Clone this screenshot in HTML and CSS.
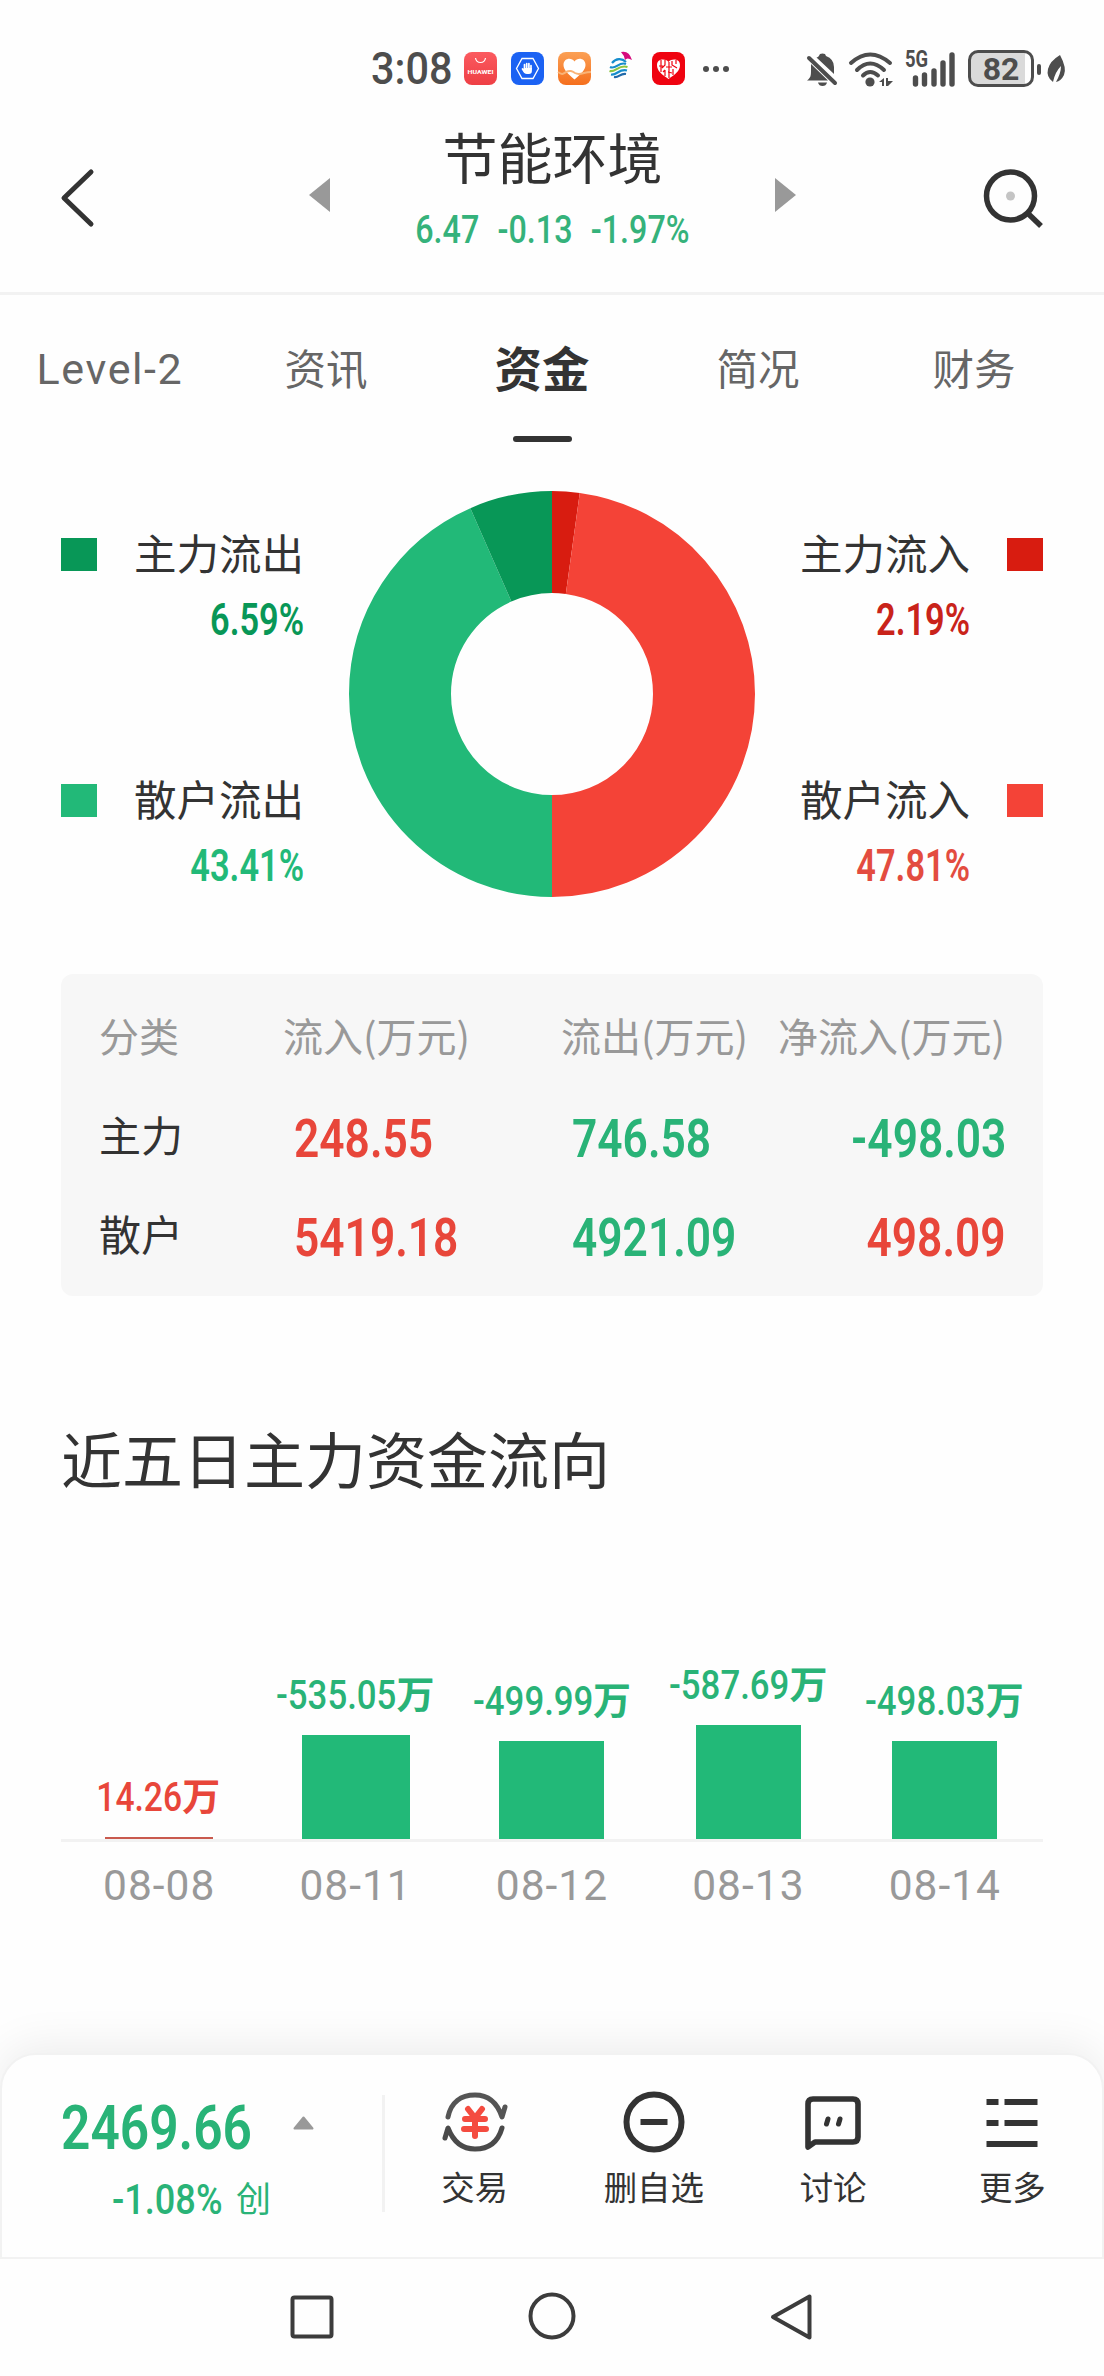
FILE: index.html
```html
<!DOCTYPE html>
<html lang="zh-CN">
<head>
<meta charset="utf-8">
<title>节能环境</title>
<link rel="stylesheet" href="styles.css">
</head>
<body>
<div class="app">
  <div class="status">
    <span class="clock">3:08</span>
    <div class="apps">
      <svg width="33" height="33" viewBox="0 0 33 33"><defs><linearGradient id="hw" x1="0" y1="0" x2="0" y2="1"><stop offset="0" stop-color="#fb5a5f"/><stop offset="1" stop-color="#ee3f45"/></linearGradient></defs><rect width="33" height="33" rx="8" fill="url(#hw)"/><path d="M11.500 6c1 6 9 6 10 0" fill="none" stroke="#fff" stroke-width="1.200"/><text x="16.500" y="21.500" text-anchor="middle" textLength="26" lengthAdjust="spacingAndGlyphs" class="hw-text">HUAWEI</text></svg>
      <svg width="33" height="33" viewBox="0 0 33 33"><rect width="33" height="33" rx="8" fill="#1b62f3"/><path d="M11 6.500h11l5.500 10-5.500 10H11l-5.500-10z" fill="none" stroke="#fff" stroke-width="1.300"/><path d="M13.500 17v-4.500M15.700 16v-4.500M17.900 16v-4.500M20 17v-3.500M11.500 17l2 3" stroke="#fff" stroke-width="1.700" stroke-linecap="round"/><path d="M12.700 16h8.200v3q0 3-3 3h-2q-3 0-3.200-3z" fill="#fff"/></svg>
      <svg width="33" height="33" viewBox="0 0 33 33"><defs><linearGradient id="ht" x1="0" y1="0" x2="0" y2="1"><stop offset="0" stop-color="#fba055"/><stop offset="1" stop-color="#f56f1d"/></linearGradient></defs><rect width="33" height="33" rx="8" fill="url(#ht)"/><path d="M16.500 27.500C10 22 5.500 18 5.500 13c0-7 8-8 11-3.500C19.500 5 27.500 6 27.500 13c0 5-4.500 9-11 14.500z" fill="#fff"/><path d="M0 20c4 3 5 2 8 0 4-2 6-1 9 1 5 3 8-1 16-1" fill="none" stroke="#f9b377" stroke-width="2"/></svg>
      <svg width="33" height="33" viewBox="0 0 33 33"><g fill="none" stroke-width="2.200"><path d="M7 11c4-5 10-5 14-1" stroke="#168dcc"/><path d="M5 15c6 3 9-6 16-3" stroke="#168dcc"/><path d="M4.500 19c6 2 9-7 18-4" stroke="#8cc540"/><path d="M6 22.500c6 1 8-6 16-4" stroke="#168dcc"/><path d="M9 25c5 1 6-4 12-3" stroke="#2069a9"/></g><path d="M16 0q8-2 11 8-5-3-7 0-1-5-4-8z" fill="#d60b7c"/></svg>
      <svg width="33" height="33" viewBox="0 0 33 33"><rect width="33" height="33" rx="8" fill="#ef0310"/><path d="M16.500 27C10 22.500 5 19 5 13c0-6 8-7 11.500-3C20 6 28 7 28 13c0 6-5 9.500-11.500 14z" fill="#fff"/><path d="M9 8v12M13 8v5l-3 3M17 10v16M13 18v6M20 9v4l5 3M21 17v6M24 8v4M7 14h4M14 15h6M16 20l4 1M11 20l2-2" stroke="#ef0310" stroke-width="1.200" fill="none"/></svg>
    </div>
    <svg class="dots" width="28" height="8" viewBox="0 0 28 8" fill="#4d4d4d"><circle cx="4" cy="4" r="3"/><circle cx="14" cy="4" r="3"/><circle cx="24" cy="4" r="3"/></svg>
    <svg class="bell" width="32" height="36" viewBox="0 0 32 36" fill="#4d4d4d"><path d="M1 29.500c4-3 4-5 4-11V13L22 29.500zM12 6q1-1 2-3 2.500-1 5 0L20 5q8 3 8 11v7L10.500 6.500z"/><path d="M3 7l26 25" stroke="#4d4d4d" stroke-width="4" stroke-linecap="round"/><path d="M12 31.500h9q-1 3.500-4.500 3.500T12 31.500z"/></svg>
    <svg class="wifi" width="46" height="36" viewBox="0 0 46 36"><g fill="none" stroke="#4d4d4d" stroke-width="4" stroke-linecap="round"><path d="M3 12Q22-5 42 12"/><path d="M9 19Q22 6 36 19"/><path d="M15 24.500Q22 17.500 30 24.500"/></g><circle cx="22" cy="31" r="4.600" fill="#4d4d4d"/><path d="M36 27v8h-2v-4h-3zM38 35v-8h2v3h5l-5 5z" fill="#4d4d4d"/></svg>
    <div class="signal"><span>5G</span><svg width="52" height="36" viewBox="0 0 52 36"><path d="M10.500 27v6M19.500 24v9M29 20v13M38 12v21M47 4v29" stroke="#4d4d4d" stroke-width="5.400" stroke-linecap="round"/></svg></div>
    <div class="battery">82</div>
    <svg class="leaf" width="29" height="36" viewBox="0 0 29 36"><rect x="1" y="13" width="4" height="11" rx="2" fill="#4d4d4d"/><path d="M24 4q7 13 4 20-3 6-8 7 5-9 5-16-6 6-8 16-7-5-5-13Q14 10 24 4z" fill="#4d4d4d"/></svg>
  </div>

  <header class="header">
    <svg width="36" height="62" viewBox="0 0 36 62"><path d="M32 5L5 31l27 26" fill="none" stroke="#333" stroke-width="5" stroke-linecap="round" stroke-linejoin="round"/></svg>
    <svg class="prev" width="21" height="34" viewBox="0 0 21 34"><path d="M21 0v34L0 17z" fill="#999"/></svg>
    <div class="stock">
      <h1>节能环境</h1>
      <div class="quote"><span class="din">6.47 -0.13 -1.97%</span></div>
    </div>
    <svg class="next" width="21" height="34" viewBox="0 0 21 34"><path d="M0 0v34l21-17z" fill="#999"/></svg>
    <svg width="62" height="62" viewBox="0 0 62 62"><circle cx="26.500" cy="29" r="24" fill="none" stroke="#333" stroke-width="5.500"/><circle cx="26.500" cy="29" r="4.500" fill="#c4c4c4"/><path d="M43.500 46l13.500 13" stroke="#333" stroke-width="5.500"/></svg>
  </header>

  <nav class="tabs">
    <span class="latin">Level-2</span><span>资讯</span><span class="active">资金</span><span>简况</span><span>财务</span>
  </nav>

  <section class="flow">
    <div class="legend left">
      <div class="item deep-green"><i></i><div><b>主力流出</b><span class="din">6.59%</span></div></div>
      <div class="item green"><i></i><div><b>散户流出</b><span class="din">43.41%</span></div></div>
    </div>
    <svg class="donut" width="406" height="406" viewBox="-203 -203 406 406">
      <g fill="none" stroke-width="102" transform="rotate(-90)">
        <circle r="152" pathLength="100" stroke="#d81c10" stroke-dasharray="2.190 97.810"/>
        <circle r="152" pathLength="100" stroke="#f44337" stroke-dasharray="47.810 52.190" stroke-dashoffset="-2.190"/>
        <circle r="152" pathLength="100" stroke="#22b978" stroke-dasharray="43.410 56.590" stroke-dashoffset="-50"/>
        <circle r="152" pathLength="100" stroke="#089757" stroke-dasharray="6.590 93.410" stroke-dashoffset="-93.410"/>
      </g>
    </svg>
    <div class="legend right">
      <div class="item deep-red"><div><b>主力流入</b><span class="din">2.19%</span></div><i></i></div>
      <div class="item red"><div><b>散户流入</b><span class="din">47.81%</span></div><i></i></div>
    </div>
  </section>

  <section class="table">
    <div class="row head"><span>分类</span><span>流入(万元)</span><span>流出(万元)</span><span>净流入(万元)</span></div>
    <div class="row"><span>主力</span><span class="din up">248.55</span><span class="din down">746.58</span><span class="din down">-498.03</span></div>
    <div class="row"><span>散户</span><span class="din up">5419.18</span><span class="din down">4921.09</span><span class="din up">498.09</span></div>
  </section>

  <h2>近五日主力资金流向</h2>

  <section class="chart">
    <div class="bars">
      <div class="col up"><p><span class="din">14.26</span><b>万</b></p><i class="wide" style="height:2px"></i></div>
      <div class="col down"><p><span class="din">-535.05</span><b>万</b></p><i class="wide" style="height:104px"></i></div>
      <div class="col down"><p><span class="din">-499.99</span><b>万</b></p><i style="height:98px"></i></div>
      <div class="col down"><p><span class="din">-587.69</span><b>万</b></p><i style="height:114px"></i></div>
      <div class="col down"><p><span class="din">-498.03</span><b>万</b></p><i style="height:98px"></i></div>
    </div>
    <div class="dates"><span>08-08</span><span>08-11</span><span>08-12</span><span>08-13</span><span>08-14</span></div>
  </section>

  <footer class="dock">
    <div class="index">
      <div class="price"><span class="din">2469.66</span><svg width="21" height="14" viewBox="0 0 21 14"><path d="M10.500 1.500L19.500 12.500h-18z" fill="#999" stroke="#999" stroke-width="2" stroke-linejoin="round"/></svg></div>
      <div class="change"><span class="din">-1.08%</span><span>创</span></div>
    </div>
    <div class="actions">
      <div class="action"><svg width="68" height="62" viewBox="0 0 68 62"><g fill="none" stroke-width="5" stroke-linecap="round" stroke-linejoin="round"><path d="M7 26C10 11 20 4 34 4c13 0 22 7 27 22l3-10" stroke="#555"/><path d="M61 37C57 51 48 58 34 58 21 58 12 50 7 37L4 47" stroke="#4a4a4a"/><path d="M27 18l7 9 7-9M24 28h20M23 38h22M34 27v18" stroke="#f44c40" stroke-width="6"/></g></svg><span>交易</span></div>
      <div class="action"><svg width="62" height="62" viewBox="0 0 62 62" fill="none" stroke="#333" stroke-width="6"><circle cx="31" cy="31" r="27.500"/><path d="M17.500 31h27"/></svg><span>删自选</span></div>
      <div class="action"><svg width="60" height="62" viewBox="0 0 60 62" fill="none" stroke="#333" stroke-width="5.600" stroke-linejoin="round" stroke-linecap="round"><path d="M5 56V13q0-5 5-5h40q5 0 5 5v33q0 5-5 5H12z"/><path d="M25 28l-1.500 5M37 28l-1.500 5" stroke-width="5"/></svg><span>讨论</span></div>
      <div class="action"><svg width="52" height="62" viewBox="0 0 52 62" stroke="#333" stroke-width="6.200"><path d="M.500 11h12M18.500 11h33M.500 32h12M18.500 32h33M.500 53h51"/></svg><span>更多</span></div>
    </div>
  </footer>

  <div class="sysnav">
    <svg width="50" height="50" viewBox="0 0 50 50"><rect x="5.500" y="5.500" width="39" height="39" rx="2" fill="none" stroke="#3c3c3c" stroke-width="4"/></svg>
    <svg width="50" height="50" viewBox="0 0 50 50"><circle cx="25" cy="24" r="21.500" fill="none" stroke="#3c3c3c" stroke-width="4"/></svg>
    <svg width="50" height="50" viewBox="0 0 50 50"><path d="M42.500 4.500v41L6 25z" fill="none" stroke="#3c3c3c" stroke-width="4" stroke-linejoin="round"/></svg>
  </div>
</div>
</body>
</html>
```
FILE: styles.css
```css
* { box-sizing: border-box; margin: 0; padding: 0; }
body { width: 1104px; height: 2376px; background: #fefefe; color: #333; font-family: "Noto Sans CJK SC", sans-serif; overflow: hidden; }
svg { display: block; flex: none; overflow: visible; }
i { display: block; flex: none; }
.app { display: flex; flex-direction: column; width: 1104px; height: 2376px; overflow: hidden; }
.din { display: inline-block; font-family: Roboto, sans-serif; font-weight: 500; white-space: nowrap; transform: scaleX(.83); transform-origin: left center; }
.up { color: #e8463a; }
.down { color: #29b377; }

.status { display: flex; align-items: center; height: 112px; padding: 25px 0 0 371px; flex: none; color: #4d4d4d; font-family: Roboto, sans-serif; }
.clock { width: 93px; font-size: 45px; line-height: 50px; font-weight: 500; white-space: nowrap; transform: scaleX(.92); transform-origin: left; }
.apps { display: flex; gap: 14px; }
.hw-text { font: 700 6px Roboto, sans-serif; fill: #fff; }
.dots { margin-left: 17px; }
.bell { margin-left: 76px; }
.wifi { margin-left: 10px; }
.signal { display: flex; width: 67px; margin-left: 11px; align-items: flex-start; }
.signal span { width: 0; font-size: 23px; line-height: 18px; font-weight: 700; transform: scaleX(.8); transform-origin: left; }
.battery { width: 66px; height: 37px; border: 3px solid #4d4d4d; border-radius: 10px; background: linear-gradient(90deg, #dadada 54px, #fefefe 54px); text-align: center; font-size: 32px; line-height: 32px; font-weight: 700; margin-left: -4px; }
.leaf { margin-left: 2px; }

.header { display: flex; height: 183px; flex: none; border-bottom: 3px solid #f2f2f2; padding: 0 58px 0 59px; }
.header > svg { margin-top: 55px; }
.header > .prev { margin: 66px 0 0 214px; }
.header > .next { margin: 66px 188px 0 0; }
.stock { flex: 1; text-align: center; }
.stock h1 { font-size: 55px; line-height: 80px; font-weight: 400; margin-top: 3px; }
.quote { height: 50px; line-height: 50px; color: #35b27b; font-size: 38px; margin: 7px -60px 0; }
.quote .din { transform: scaleX(.85); transform-origin: center; word-spacing: 12px; }

.tabs { display: grid; grid-template-columns: repeat(5, 216px); height: 155px; flex: none; padding: 42px 0 0 2px; text-align: center; font-size: 41.500px; line-height: 60px; color: #666; }
.latin { font-family: Roboto, sans-serif; font-size: 43px; line-height: 65px; letter-spacing: 1.600px; }
.active { display: flex; flex-direction: column; align-items: center; justify-content: space-between; height: 105px; font-size: 47.500px; font-weight: 700; color: #333; }
.active::after { content: ""; width: 59px; height: 6px; border-radius: 3px; background: #333; }

.flow { display: flex; justify-content: space-between; height: 524px; flex: none; padding: 41px 61px 0; }
.legend { width: 243px; display: flex; flex-direction: column; gap: 114px; padding-top: 31px; }
.item { display: flex; justify-content: space-between; height: 132px; }
.item i { width: 36px; height: 33px; margin-top: 16px; background: currentColor; }
.item div { text-align: right; }
.item b { display: block; font-size: 42.500px; line-height: 60px; font-weight: 400; color: #333; }
.item .din { display: block; font-size: 43.500px; line-height: 78px; font-weight: 600; transform: scaleX(.79); transform-origin: right; }
.deep-green { color: #089757; }
.green { color: #22b978; }
.deep-red { color: #d81c10; }
.red { color: #f44337; }
.deep-red .din { color: #c9231a; }
.red .din { color: #e34c40; }

.table { margin: 0 61px; height: 322px; flex: none; padding: 13px 38px 0; border-radius: 12px; background: #f7f7f7; }
.row { display: grid; grid-template-columns: 184px 278px 1fr auto; height: 99px; line-height: 97px; font-size: 42px; }
.row .din { font-size: 54px; font-weight: 600; line-height: 107px; margin-left: 11px; transform: scaleX(.82); transform-origin: left; }
.row .din:last-child { transform-origin: right; margin-left: 0; margin-right: -1px; }
.head { height: 98px; line-height: 96px; font-size: 40px; color: #999; }

h2 { margin: 126px 61px 0; flex: none; font-size: 61px; line-height: 72px; height: 72px; font-weight: 400; }

.chart { margin: 164px 61px 0; height: 395px; flex: none; }
.bars { display: grid; grid-template-columns: repeat(5, 1fr); height: 184px; border-bottom: 3px solid #f2f2f2; }
.col { display: flex; flex-direction: column; justify-content: flex-end; align-items: center; }
.col p { display: flex; width: 158px; justify-content: flex-end; font-size: 38px; line-height: 50px; white-space: nowrap; margin-bottom: 14px; }
.col b { font-weight: 700; margin-top: -4px; height: 50px; }
.col .din { font-size: 40px; transform: scaleX(.87); transform-origin: right; }
.col i { width: 105px; background: #22b978; }
.col i.wide { width: 108px; }
.col.up i { background: #c95a4e; }
.col.up p { width: 122px; }
.col.up .din { transform: scaleX(.84); }
.dates { display: grid; grid-template-columns: repeat(5, 1fr); text-align: center; font: 400 42.500px/88px Roboto, sans-serif; letter-spacing: 1px; color: #999; }

.dock { display: flex; height: 206px; flex: none; border: 2px solid #f2f2f2; border-radius: 36px 36px 0 0; background: #fefefe; box-shadow: 0 -8px 44px rgba(0, 0, 0, .07); }
.index { width: 383px; flex: none; height: 117px; margin-top: 40px; border-right: 3px solid #f2f2f2; color: #29b377; }
.price { display: flex; height: 66px; align-items: center; padding-left: 59px; font-size: 62px; line-height: 66px; }
.price .din { width: 232px; font-weight: 600; transform: scaleX(.83); }
.price svg { margin-top: -10px; }
.change { display: flex; height: 66px; padding-left: 110px; margin-top: 6px; font-size: 35px; line-height: 60px; }
.change .din { width: 124px; font-size: 43px; line-height: 64px; transform: scaleX(.84); }
.actions { display: grid; grid-template-columns: repeat(4, 1fr); flex: 1; padding-top: 36px; }
.action { display: flex; flex-direction: column; align-items: center; }
.action span { font-size: 33.500px; line-height: 60px; margin-top: 3px; white-space: nowrap; }

.sysnav { display: flex; gap: 190px; height: 117px; flex: none; padding: 33px 0 0 287px; background: #fefefe; position: relative; }
```
